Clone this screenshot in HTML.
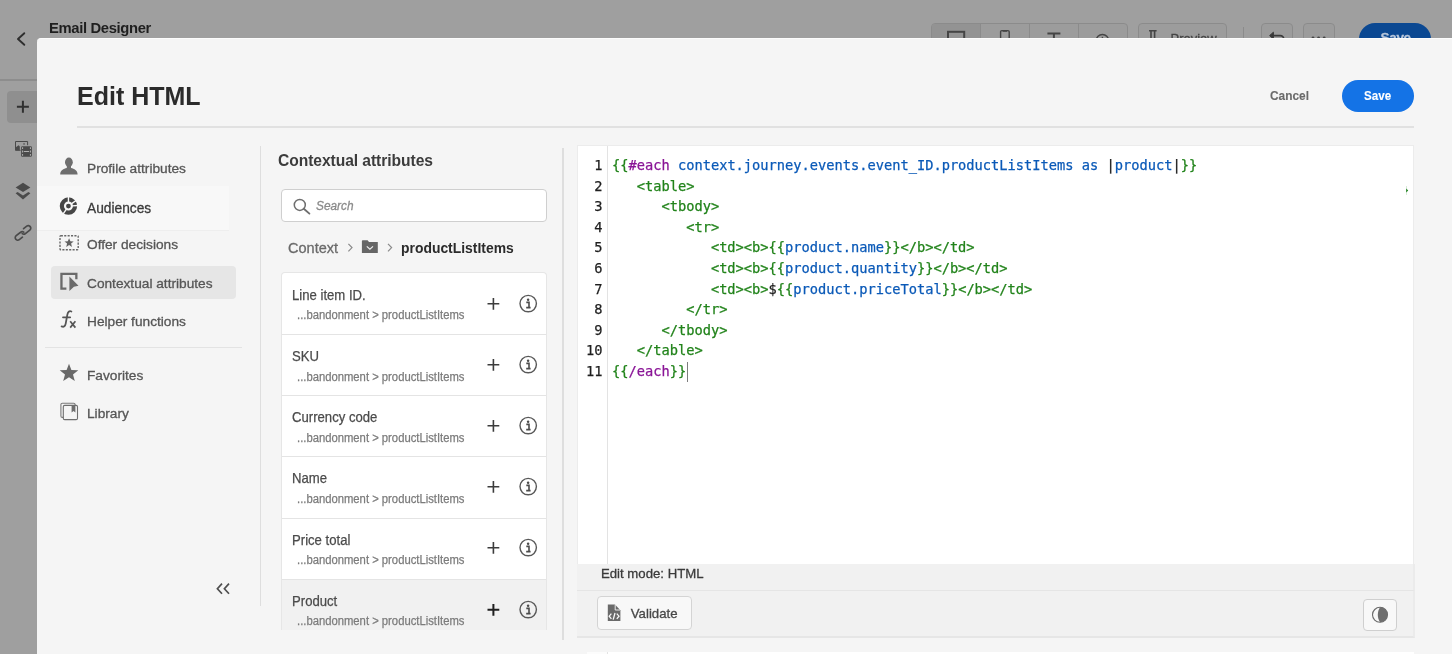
<!DOCTYPE html>
<html lang="en">
<head>
<meta charset="utf-8">
<title>Email Designer - Edit HTML</title>
<style>
*{box-sizing:border-box;margin:0;padding:0}
html,body{width:1452px;height:654px;overflow:hidden}
body{background:#9f9f9f;font-family:"Liberation Sans",sans-serif;color:#4b4b4b;position:relative}
.abs{position:absolute}
.t{position:absolute;white-space:nowrap;line-height:1;-webkit-text-stroke:0.3px}
/* underlying (dimmed) app */
#app-title{-webkit-text-stroke:0;left:49px;top:20.5px;font-size:14.8px;font-weight:bold;color:#1f1f1f;letter-spacing:-0.35px}
#app-line{left:0;top:79px;width:37px;height:2px;background:#8d8d8d}
#plusbtn{left:7px;top:91.2px;width:34px;height:31.4px;border-radius:4px;background:#8f8f8f}
.tb{position:absolute;border:1px solid #8b8b8b;border-radius:4px;background:#9c9c9c}
#seg{left:931px;top:23px;width:197px;height:32px;overflow:hidden}
#seg i{position:absolute;top:0;width:1px;height:32px;background:#8b8b8b}
#seg .on{position:absolute;left:0;top:0;width:48px;height:32px;background:#939393}
#preview{left:1138px;top:23px;width:89px;height:32px}
#sep{left:1242.5px;top:27px;width:1px;height:12px;background:#8b8b8b}
#undo{left:1261px;top:23px;width:32px;height:32px}
#more{left:1303px;top:23px;width:32px;height:32px}
#bgsave{left:1359px;top:22.8px;width:72px;height:32px;border-radius:16px;background:#0b4892}
/* dialog */
#dlg{left:37px;top:38px;width:1415px;height:616px;background:#f5f5f5;border-top-left-radius:4px;border-top:1px solid #fcfcfc}
#h1{-webkit-text-stroke:0;left:77px;top:84.1px;font-size:25px;font-weight:bold;color:#2b2b2b}
#hr{left:77px;top:126px;width:1337px;height:2px;background:#e1e1e1}
#cancel{left:1270px;top:88.95px;-webkit-text-stroke:0.1px;font-size:13.3px;font-weight:bold;color:#6a6a6a;transform:scaleX(.895);transform-origin:0 0}
#save{left:1342px;top:80px;width:72px;height:32px;border-radius:16px;background:#1473e6}
#save-t{left:1364px;top:88.95px;-webkit-text-stroke:0.1px;font-size:13.3px;font-weight:bold;color:#fff;transform:scaleX(.875);transform-origin:0 0}
/* left nav */
.nav{font-size:13.7px;color:#565656;left:87px}
#aud-bg{left:37px;top:186px;width:192px;height:44.5px;background:#f8f8f8;border-bottom:1px solid #eee}
#sel-bg{left:51px;top:265.7px;width:184.6px;height:33.8px;background:#e6e6e6;border-radius:4px}
#nav-hr{left:45px;top:347.4px;width:197px;height:1px;background:#e3e3e3}
.vline{position:absolute;width:2px;background:#dedede}
/* middle */
#mid-title{-webkit-text-stroke:0;left:278px;top:152.59px;font-size:15.6px;font-weight:bold;color:#3c3c3c;letter-spacing:-0.05px}
#search{left:281px;top:189.3px;width:266px;height:32.4px;border:1px solid #cfcfcf;border-radius:4px;background:#fff}
#search-t{left:316px;top:198.6px;font-size:13.7px;font-style:italic;color:#8a8a8a;transform:scaleX(.865);transform-origin:0 0}
.bc{font-size:16px;color:#6a6a6a}
#list{left:281px;top:272.3px;width:266px;height:357.7px;background:#fff;border:1px solid #e6e6e6;border-bottom:none;border-radius:4px 4px 0 0;overflow:hidden}
.row{position:absolute;left:0;width:264px;height:61.2px;border-bottom:1px solid #e4e4e4}
.row .a,.row .b{-webkit-text-stroke:0.25px}
.row .a{position:absolute;left:10.3px;top:13.96px;font-size:14.1px;transform:scaleX(.932);transform-origin:0 0;color:#4b4b4b;line-height:1;white-space:nowrap}
.row .b{position:absolute;left:14.5px;top:35.59px;font-size:12.3px;transform:scaleX(.916);transform-origin:0 0;color:#7b7b7b;line-height:1;white-space:nowrap}
.row svg{position:absolute}
/* editor */
#ed{left:577px;top:145px;width:837px;height:419.5px;background:#fff;border:1px solid #ececec}
#gut{left:607px;top:146px;width:1px;height:418px;background:#e3e3e3}
.ln,.code{position:absolute;font-family:"DejaVu Sans Mono","Liberation Mono",monospace;font-size:13.7px;line-height:20.57px;white-space:pre}
.ln,.code{-webkit-text-stroke:0.25px}
.ln{left:576.4px;width:26px;top:155.2px;text-align:right;color:#1f1f1f}
.code{left:612px;top:155.2px;color:#1f1f1f}
.g{color:#21831a}.p{color:#8a1597}.b{color:#0b5ab8}
#status{left:577px;top:564.3px;width:838px;border-right:2px solid #ebebeb;height:27px;background:#f1f1f1;border-bottom:1px solid #e5e5e5}
#status-t{left:600.6px;top:567.2px;font-size:13.7px;color:#3a3a3a;transform:scaleX(.963);transform-origin:0 0}
#tool{left:577px;top:591px;width:838px;height:47px;background:#f1f1f1;border-bottom:2px solid #e6e6e6;border-right:2px solid #ebebeb}
#validate{left:597px;top:596.3px;width:95px;height:33.4px;border:1px solid #d4d4d4;border-radius:4px;background:#f8f8f8}
#validate-t{left:630.8px;top:606.9px;font-size:13.2px;color:#484848}
#theme{left:1363px;top:598.8px;width:34px;height:32.3px;border:1px solid #cfcfcf;border-radius:4px;background:#f8f8f8}
#ed2{left:587px;top:651.6px;width:827px;height:3px;background:#fff;border-left:20px solid #fcfcfc}
#ed2:after{content:"";position:absolute;left:0;top:0;width:1px;height:3px;background:#e3e3e3}
</style>
</head>
<body>
<div id="wrap" style="position:absolute;left:0;top:0;width:1452px;height:654px;will-change:transform">
<!-- dimmed app behind -->
<div class="t" id="app-title">Email Designer</div>
<div class="abs" id="app-line"></div>
<div class="abs" id="plusbtn"></div>
<div class="tb" id="seg"><span class="on"></span><i style="left:47.8px"></i><i style="left:97px"></i><i style="left:146.4px"></i></div>
<div class="tb" id="preview"></div>
<div class="abs" id="sep"></div>
<div class="tb" id="undo"></div>
<div class="tb" id="more"></div>
<div class="abs" id="bgsave"></div>
<svg class="abs" style="left:925px;top:15px" width="527" height="40" viewBox="925 15 527 40" fill="none">
  <rect x="948" y="31.8" width="16.2" height="12" stroke="#454545" stroke-width="2"/>
  <rect x="1000.6" y="30.6" width="8.6" height="15" rx="1.2" stroke="#454545" stroke-width="1.4"/>
  <rect x="1002.6" y="30.2" width="4.6" height="1.6" fill="#454545"/>
  <path d="M1047.4 33.6 H1060.4 M1053.9 33.6 V46" stroke="#454545" stroke-width="2"/>
  <circle cx="1102.4" cy="40.6" r="6.2" stroke="#454545" stroke-width="1.5"/>
  <path d="M1102.4 36.8 V40.8 H1105.4" stroke="#454545" stroke-width="1.4"/>
  <path d="M1149 30.8 H1156.6 M1151 31 V40 M1154.6 31 V40" stroke="#454545" stroke-width="1.6"/>
  <path d="M1269.6 35.6 L1273.4 32.2 V39 Z" fill="#3a3a3a" stroke="#3a3a3a" stroke-width="1" stroke-linejoin="round"/>
  <path d="M1272.4 35.6 H1280.2 a3.6 3.6 0 0 1 3.6 3.6 V41" stroke="#3a3a3a" stroke-width="1.7"/>
  <circle cx="1313" cy="37.8" r="1.4" fill="#454545"/><circle cx="1318.6" cy="37.8" r="1.4" fill="#454545"/><circle cx="1324.2" cy="37.8" r="1.4" fill="#454545"/>
</svg>
<div class="t" style="left:1170.5px;top:32.4px;font-size:13px;color:#454545">Preview</div>
<div class="t" style="left:1380.5px;top:31.4px;font-size:13.5px;font-weight:bold;color:#b9c7db;letter-spacing:-0.3px">Save</div>

<svg class="abs" style="left:0;top:0" width="60" height="260" viewBox="0 0 60 260" fill="none">
  <path d="M24.3 33.2 L18 39 L24.3 44.8" stroke="#2e2e2e" stroke-width="1.9" stroke-linecap="round" stroke-linejoin="round"/>
  <path d="M22.9 100.8 V112.8 M16.9 106.8 H28.9" stroke="#303030" stroke-width="2"/>
  <!-- assets -->
  <path d="M20.6 150.3 H15.5 V141.5 H27.6 V145.2" stroke="#4a4a4a" stroke-width="1"/>
  <path d="M15.5 150.3 V147.6 L18.6 145.2 L19.8 146.4 V150.3 Z" fill="#4a4a4a"/>
  <rect x="23.3" y="143.2" width="1.5" height="1.5" fill="#5a5a5a"/>
  <rect x="21.1" y="146.2" width="10.8" height="10.6" rx="1.2" fill="#4a4a4a"/>
  <path d="M23.8 151 H29.1 V152 H23.8 Z" fill="#b0b0b0"/>
  <path d="M22 147.2h1.1v1.8h-1.1z M22 150.6h1.1v1.8h-1.1z M22 154h1.1v1.8h-1.1z M29.9 147.2h1.1v1.8h-1.1z M29.9 150.6h1.1v1.8h-1.1z M29.9 154h1.1v1.8h-1.1z" fill="#a8a8a8"/>
  <!-- layers -->
  <path d="M23 182.8 L30.4 187.4 L23 192 L15.6 187.4 Z" fill="#4a4a4a"/>
  <path d="M17.6 192 L23 195.4 L28.4 192 L30.4 193.3 L23 199.4 L15.6 193.3 Z" fill="#4a4a4a"/>
  <!-- link -->
  <g stroke="#4a4a4a" stroke-width="1.7" stroke-linecap="round" fill="none">
    <path transform="translate(25.9 230) rotate(-38)" d="M -1 -2.5 H 3 A2.5 2.5 0 0 1 3 2.5 H -2.6 A2.5 2.5 0 0 1 -5.1 0.6"/>
    <path transform="translate(20.1 235.8) rotate(142)" d="M -1 -2.5 H 3 A2.5 2.5 0 0 1 3 2.5 H -2.6 A2.5 2.5 0 0 1 -5.1 0.6"/>
  </g>
</svg>


<!-- dialog -->
<div class="abs" id="dlg"></div>
<div class="t" id="h1">Edit HTML</div>
<div class="abs" id="hr"></div>
<div class="t" id="cancel">Cancel</div>
<div class="abs" id="save"></div>
<div class="t" id="save-t">Save</div>

<!-- left nav -->
<div class="abs" id="aud-bg"></div>
<div class="abs" id="sel-bg"></div>
<div class="t nav" style="top:161.6px">Profile attributes</div>
<div class="t nav" style="top:201.43px;color:#3a3a3a;font-size:14.5px;transform:scaleX(.948);transform-origin:0 0">Audiences</div>
<div class="t nav" style="top:237.7px">Offer decisions</div>
<div class="t nav" style="top:276.5px">Contextual attributes</div>
<div class="t nav" style="top:315.3px">Helper functions</div>
<div class="abs" id="nav-hr"></div>
<div class="t nav" style="top:368.6px">Favorites</div>
<div class="t nav" style="top:407.1px">Library</div>

<svg class="abs" style="left:50px;top:150px" width="60" height="280" viewBox="50 150 60 280" fill="none">
  <!-- person -->
  <g fill="#6e6e6e">
    <ellipse cx="68.9" cy="162.3" rx="3.9" ry="4.7"/>
    <path d="M60.2 174.4 C60.2 170.4 63.6 168.9 66.8 168 L66.8 166 H71 L71 168 C74.2 168.9 77.6 170.4 77.6 174.4 Z"/>
  </g>
  <!-- audiences -->
  <g>
    <circle cx="68.45" cy="206.05" r="6.6" stroke="#464646" stroke-width="4.2"/>
    <path d="M68.45 202.45 L68.45 196.25 M71.36 203.93 L76.38 200.29 M72.05 205.86 L78.24 205.54 M66.44 209.03 L62.97 214.17" stroke="#f8f8f8" stroke-width="1.4"/>
    <circle cx="68.45" cy="206.05" r="2.4" fill="#464646"/>
  </g>
  <!-- offer -->
  <rect x="60" y="235.7" width="18.2" height="14" rx="0.8" stroke="#686868" stroke-width="1.4" stroke-dasharray="2.1 1.3"/>
  <path d="M69.1 238.2 L70.4 241.3 L73.7 241.5 L71.1 243.6 L72 246.9 L69.1 245.1 L66.2 246.9 L67.1 243.6 L64.5 241.5 L67.8 241.3 Z" fill="#636363"/>
  <!-- contextual -->
  <path d="M66.4 288.65 H61.45 V273.85 H76.35 V279.3" stroke="#6a6a6a" stroke-width="2.3"/>
  <path d="M69.4 276.4 L78.5 285.8 L73.9 286.7 L69.4 290.9 Z" fill="#6a6a6a"/>
  <!-- fx -->
  <path d="M61.6 326.4 C63.8 327.4 65.2 326.2 65.7 323.6 L67.3 314.8 C67.8 311.9 69.2 310.6 71.4 311.5 M63 317.3 H70.2" stroke="#565656" stroke-width="1.8" stroke-linecap="round"/>
  <path d="M70.2 321.2 L75.4 327.6 M75.4 321.2 L70.2 327.6" stroke="#565656" stroke-width="1.7"/>
  <!-- star -->
  <path d="M69 363.7 L71.4 369.9 L78.3 370.3 L73 374.6 L74.8 381 L69 377.3 L63.2 381 L65 374.6 L59.7 370.3 L66.6 369.9 Z" fill="#696969"/>
  <!-- library -->
  <rect x="60.9" y="403.2" width="14.2" height="14.2" rx="1.4" stroke="#7a7a7a" stroke-width="1.1"/>
  <rect x="63.3" y="405.4" width="14.2" height="14.2" rx="1.4" stroke="#6e6e6e" stroke-width="1.1" fill="#f5f5f5"/>
  <path d="M71.6 405.4 H75.4 V412.4 L73.5 411 L71.6 412.4 Z" fill="#6e6e6e"/>
</svg>
<svg class="abs" style="left:212px;top:578px" width="24" height="22" viewBox="212 578 24 22" fill="none"><path d="M222 583.6 L217.4 588.7 L222 593.8 M229 583.6 L224.4 588.7 L229 593.8" stroke="#4e4e4e" stroke-width="1.7"/></svg>
<div class="vline" style="left:259.6px;top:146px;height:460px;width:1.6px"></div>

<!-- middle panel -->
<div class="t" id="mid-title">Contextual attributes</div>
<div class="abs" id="search"></div>
<div class="t" id="search-t">Search</div>
<div class="t bc" style="left:288px;top:240.12px;font-size:15.1px;transform:scaleX(.962);transform-origin:0 0">Context</div>
<div class="t bc" style="left:401px;top:240.12px;font-size:15.1px;transform:scaleX(.921);transform-origin:0 0;font-weight:bold;color:#2b2b2b;-webkit-text-stroke:0">productListItems</div>

<svg class="abs" style="left:281px;top:190px" width="270" height="70" viewBox="281 190 270 70" fill="none">
  <circle cx="299.8" cy="204.9" r="5.5" stroke="#6e6e6e" stroke-width="1.5"/>
  <path d="M303.8 208.8 L309.4 213.6" stroke="#6e6e6e" stroke-width="1.9" stroke-linecap="round"/>
  <path d="M348.4 243.9 L352 247.6 L348.4 251.3" stroke="#8a8a8a" stroke-width="1.2"/>
  <path d="M388 243.9 L391.6 247.6 L388 251.3" stroke="#8a8a8a" stroke-width="1.2"/>
  <path d="M361.9 241 L362.4 240.2 H367.6 L369 242 H377.8 V253 H361.9 Z" fill="#666"/>
  <path d="M366.8 246.4 L369.9 249.2 L373 246.4" stroke="#f0f0f0" stroke-width="1.2"/>
</svg>
<div class="abs" id="list">
  <div class="row" style="top:0.5px"><span class="a">Line item ID.</span><span class="b">...bandonment &gt; productListItems</span><svg style="left:204px;top:19.9px" width="54" height="20" viewBox="0 0 54 20" fill="none"><path d="M7.4 3.9 V15.7 M1.5 9.8 H13.3" stroke="#3c3c3c" stroke-width="1.6"/><circle cx="42.2" cy="9.6" r="8.2" stroke="#585858" stroke-width="1.4"/><circle cx="42.1" cy="5.7" r="1.25" fill="#4c4c4c"/><path d="M40.3 8.4 H43 V13.3 M40.2 13.6 H44.6" stroke="#4c4c4c" stroke-width="1.6"/></svg></div>
  <div class="row" style="top:61.7px"><span class="a">SKU</span><span class="b">...bandonment &gt; productListItems</span><svg style="left:204px;top:19.9px" width="54" height="20" viewBox="0 0 54 20" fill="none"><path d="M7.4 3.9 V15.7 M1.5 9.8 H13.3" stroke="#3c3c3c" stroke-width="1.6"/><circle cx="42.2" cy="9.6" r="8.2" stroke="#585858" stroke-width="1.4"/><circle cx="42.1" cy="5.7" r="1.25" fill="#4c4c4c"/><path d="M40.3 8.4 H43 V13.3 M40.2 13.6 H44.6" stroke="#4c4c4c" stroke-width="1.6"/></svg></div>
  <div class="row" style="top:122.9px"><span class="a">Currency code</span><span class="b">...bandonment &gt; productListItems</span><svg style="left:204px;top:19.9px" width="54" height="20" viewBox="0 0 54 20" fill="none"><path d="M7.4 3.9 V15.7 M1.5 9.8 H13.3" stroke="#3c3c3c" stroke-width="1.6"/><circle cx="42.2" cy="9.6" r="8.2" stroke="#585858" stroke-width="1.4"/><circle cx="42.1" cy="5.7" r="1.25" fill="#4c4c4c"/><path d="M40.3 8.4 H43 V13.3 M40.2 13.6 H44.6" stroke="#4c4c4c" stroke-width="1.6"/></svg></div>
  <div class="row" style="top:184.1px"><span class="a">Name</span><span class="b">...bandonment &gt; productListItems</span><svg style="left:204px;top:19.9px" width="54" height="20" viewBox="0 0 54 20" fill="none"><path d="M7.4 3.9 V15.7 M1.5 9.8 H13.3" stroke="#3c3c3c" stroke-width="1.6"/><circle cx="42.2" cy="9.6" r="8.2" stroke="#585858" stroke-width="1.4"/><circle cx="42.1" cy="5.7" r="1.25" fill="#4c4c4c"/><path d="M40.3 8.4 H43 V13.3 M40.2 13.6 H44.6" stroke="#4c4c4c" stroke-width="1.6"/></svg></div>
  <div class="row" style="top:245.3px"><span class="a">Price total</span><span class="b">...bandonment &gt; productListItems</span><svg style="left:204px;top:19.9px" width="54" height="20" viewBox="0 0 54 20" fill="none"><path d="M7.4 3.9 V15.7 M1.5 9.8 H13.3" stroke="#3c3c3c" stroke-width="1.6"/><circle cx="42.2" cy="9.6" r="8.2" stroke="#585858" stroke-width="1.4"/><circle cx="42.1" cy="5.7" r="1.25" fill="#4c4c4c"/><path d="M40.3 8.4 H43 V13.3 M40.2 13.6 H44.6" stroke="#4c4c4c" stroke-width="1.6"/></svg></div>
  <div class="row" style="top:306.5px;background:#f1f1f1"><span class="a">Product</span><span class="b">...bandonment &gt; productListItems</span><svg style="left:204px;top:19.9px" width="54" height="20" viewBox="0 0 54 20" fill="none"><path d="M7.4 3.9 V15.7 M1.5 9.8 H13.3" stroke="#1f1f1f" stroke-width="2"/><circle cx="42.2" cy="9.6" r="8.2" stroke="#585858" stroke-width="1.4"/><circle cx="42.1" cy="5.7" r="1.25" fill="#4c4c4c"/><path d="M40.3 8.4 H43 V13.3 M40.2 13.6 H44.6" stroke="#4c4c4c" stroke-width="1.6"/></svg></div>
</div>
<div class="vline" style="left:562px;top:148px;height:492px"></div>

<!-- editor -->
<div class="abs" id="ed"></div>
<div class="abs" id="gut"></div>
<div class="ln">1
2
3
4
5
6
7
8
9
10
11</div>
<div class="code"><span class="g">{{</span><span class="p">#each</span> <span class="b">context.journey.events.event_ID.productListItems as</span> |<span class="b">product</span>|<span class="g">}}</span>
<span class="g">   &lt;table&gt;</span>
<span class="g">      &lt;tbody&gt;</span>
<span class="g">         &lt;tr&gt;</span>
<span class="g">            &lt;td&gt;&lt;b&gt;{{</span><span class="b">product.name</span><span class="g">}}&lt;/b&gt;&lt;/td&gt;</span>
<span class="g">            &lt;td&gt;&lt;b&gt;{{</span><span class="b">product.quantity</span><span class="g">}}&lt;/b&gt;&lt;/td&gt;</span>
<span class="g">            &lt;td&gt;&lt;b&gt;</span>$<span class="g">{{</span><span class="b">product.priceTotal</span><span class="g">}}&lt;/b&gt;&lt;/td&gt;</span>
<span class="g">         &lt;/tr&gt;</span>
<span class="g">      &lt;/tbody&gt;</span>
<span class="g">   &lt;/table&gt;</span>
<span class="g">{{</span><span class="p">/each</span><span class="g">}}</span></div>
<div class="abs" style="left:686.5px;top:362px;width:1px;height:20px;background:#7d7d7d"></div>
<svg class="abs" style="left:1404px;top:184px" width="8" height="12" viewBox="1404 184 8 12"><path d="M1406.2 188.4 L1408.2 190.4 L1406.2 192.4 Z" fill="#1c7f1c"/><path d="M1406.5 186 V195" stroke="#1c7f1c" stroke-width="0.5" opacity="0.35"/></svg>
<div class="abs" id="status"></div>
<div class="t" id="status-t">Edit mode: HTML</div>
<div class="abs" id="tool"></div>
<div class="abs" id="validate"></div>
<div class="t" id="validate-t">Validate</div>
<div class="abs" id="theme"></div>

<svg class="abs" style="left:600px;top:598px" width="30" height="30" viewBox="600 598 30 30" fill="none">
  <path d="M607.8 604.5 H615 L620.4 610.2 V621 H607.8 Z" fill="#6a6a6a"/>
  <path d="M615.2 604.6 V610 H620.4" stroke="#f8f8f8" stroke-width="0.9"/>
  <path d="M611.4 613.6 L609.2 616.2 L611.4 618.8 M616.8 613.6 L619 616.2 L616.8 618.8 M615 613 L613.2 619.6" stroke="#f8f8f8" stroke-width="1.3"/>
</svg>
<svg class="abs" style="left:1366px;top:601px" width="28" height="28" viewBox="1366 601 28 28" fill="none">
  <circle cx="1380" cy="614.8" r="7.5" stroke="#6a6a6a" stroke-width="1.1"/>
  <path d="M1380 607.3 A7.5 7.5 0 0 1 1380 622.3 C1378.6 620 1377.8 617.6 1377.8 614.8 C1377.8 612 1378.6 609.6 1380 607.3 Z" fill="#6e6e6e"/>
</svg>
<div class="abs" id="ed2"></div>
</div>
</body>
</html>
